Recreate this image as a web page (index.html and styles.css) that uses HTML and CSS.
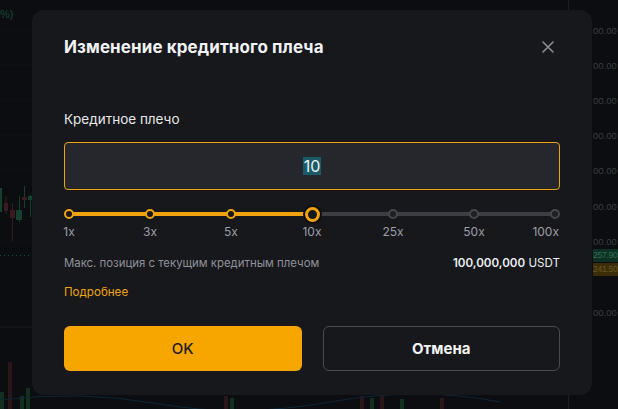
FILE: index.html
```html
<!DOCTYPE html>
<html lang="ru">
<head>
<meta charset="utf-8">
<link rel="stylesheet" href="styles.css">
</head>
<body>
<div class="backdrop">
  <svg class="chart" width="618" height="409" viewBox="0 0 618 409">
    <g stroke="#111318" stroke-width="1">
      <line x1="0" y1="30" x2="568" y2="30"/>
      <line x1="0" y1="65" x2="568" y2="65"/>
      <line x1="0" y1="100" x2="568" y2="100"/>
      <line x1="0" y1="135" x2="568" y2="135"/>
      <line x1="0" y1="170" x2="568" y2="170"/>
      <line x1="0" y1="206" x2="568" y2="206"/>
      <line x1="0" y1="242" x2="568" y2="242"/>
      <line x1="0" y1="312" x2="568" y2="312"/>
    </g>
    <line x1="0" y1="327" x2="568" y2="327" stroke="#1c1e23"/>
    <line x1="568.5" y1="0" x2="568.5" y2="409" stroke="#1c1e23"/>
    <line x1="0" y1="255.5" x2="568" y2="255.5" stroke="#1d4a3a" stroke-dasharray="1 3"/>
    <g>
      <rect x="0" y="188" width="2" height="24" fill="#16402e"/>
      <line x1="6" y1="196" x2="6" y2="214" stroke="#3a1c20"/>
      <rect x="4" y="203" width="4" height="8" fill="#3a1c20"/>
      <line x1="12.5" y1="203" x2="12.5" y2="241" stroke="#3a1c20"/>
      <rect x="10" y="210" width="5" height="8" fill="#3a1c20"/>
      <line x1="19.5" y1="196" x2="19.5" y2="222" stroke="#16402e"/>
      <rect x="16" y="210" width="6" height="10" fill="#16402e"/>
      <line x1="24.5" y1="186" x2="24.5" y2="208" stroke="#16402e"/>
      <rect x="22" y="197" width="5" height="3" fill="#3a1c20"/>
      <line x1="30.5" y1="195" x2="30.5" y2="217" stroke="#16402e"/>
      <rect x="28" y="196" width="4" height="4" fill="#16402e"/>
    </g>
    <g>
      <rect x="8" y="362" width="4" height="47" fill="#2a1519"/>
      <rect x="0" y="392" width="4" height="17" fill="#11301f"/>
      <rect x="20" y="396" width="4" height="13" fill="#11301f"/>
      <rect x="26" y="388" width="4" height="21" fill="#11301f"/>
      <rect x="224" y="396" width="4" height="13" fill="#2a1519"/>
      <rect x="230" y="398" width="4" height="11" fill="#11301f"/>
      <rect x="360" y="396" width="4" height="13" fill="#2a1519"/>
      <rect x="370" y="398" width="4" height="11" fill="#11301f"/>
      <rect x="380" y="396" width="4" height="13" fill="#2a1519"/>
      <rect x="400" y="399" width="4" height="10" fill="#11301f"/>
      <rect x="440" y="398" width="4" height="11" fill="#2a1519"/>
    </g>
    <path d="M0 400 Q 80 390 160 404 T 330 402 T 500 402" fill="none" stroke="#102636" stroke-width="1"/>
  </svg>
  <span class="pct">%)</span>
  <div class="axis">
    <span class="tick" style="top:24px">00.00</span>
    <span class="tick" style="top:59px">00.00</span>
    <span class="tick" style="top:94px">00.00</span>
    <span class="tick" style="top:129px">00.00</span>
    <span class="tick" style="top:164px">00.00</span>
    <span class="tick" style="top:200px">00.00</span>
    <span class="tick" style="top:235px">00.00</span>
    <span class="tick badge green" style="top:249px">257.90</span>
    <span class="tick badge amber" style="top:263px">241.50</span>
    <span class="tick" style="top:306px">00.00</span>
  </div>
</div>

<div class="modal">
  <div class="header">
    <h1 class="title">Изменение кредитного плеча</h1>
    <svg class="close" width="12" height="12" viewBox="0 0 12 12">
      <path d="M1 1 L11 11 M11 1 L1 11" stroke="#8b8e94" stroke-width="1.6" stroke-linecap="round"/>
    </svg>
  </div>

  <div class="label">Кредитное плечо</div>
  <div class="input"><span class="sel">10</span></div>

  <div class="slider">
    <div class="track"></div>
    <div class="fill" style="width:50%"></div>
    <span class="dot on" style="left:0%"></span>
    <span class="dot on" style="left:16.667%"></span>
    <span class="dot on" style="left:33.333%"></span>
    <span class="dot active" style="left:50%"></span>
    <span class="dot" style="left:66.667%"></span>
    <span class="dot" style="left:83.333%"></span>
    <span class="dot" style="left:100%"></span>
  </div>
  <div class="marks">
    <span class="mark" style="left:0%">1x</span>
    <span class="mark" style="left:16.667%">3x</span>
    <span class="mark" style="left:33.333%">5x</span>
    <span class="mark" style="left:50%">10x</span>
    <span class="mark" style="left:66.667%">25x</span>
    <span class="mark" style="left:83.333%">50x</span>
    <span class="mark last">100x</span>
  </div>

  <div class="info">
    <span class="muted">Макс. позиция с текущим кредитным плечом</span>
    <span class="value"><b>100,000,000</b> USDT</span>
  </div>
  <a class="more">Подробнее</a>

  <div class="actions">
    <button class="btn primary">OK</button>
    <button class="btn ghost">Отмена</button>
  </div>
</div>
</body>
</html>
```

FILE: styles.css
```css
* { box-sizing: border-box; }
html, body { margin: 0; padding: 0; }
body {
  width: 618px;
  height: 409px;
  overflow: hidden;
  background: #0b0d10;
  font-family: Inter, "Noto Sans", "Liberation Sans", sans-serif;
  position: relative;
}
.backdrop { position: absolute; inset: 0; }
.chart { position: absolute; left: 0; top: 0; }
.pct {
  position: absolute; left: 0; top: 8px;
  font-size: 11px; color: #1c4a36;
  font-family: "Liberation Sans", sans-serif;
}
.axis { position: absolute; left: 593px; top: 0; width: 25px; height: 409px; }
.tick {
  position: absolute; left: 0;
  font-family: "Liberation Sans", sans-serif;
  font-size: 9.5px; line-height: 13px;
  color: #3a3d43;
  white-space: nowrap;
}
.badge { font-size: 8.6px; letter-spacing: -0.3px; width: 25px; padding-left: 0; }
.green { background: #0e3124; color: #2f6e55; }
.amber { background: #3b2d09; color: #6b5820; }

.modal {
  position: absolute;
  left: 32px; top: 10px;
  width: 560px; height: 385px;
  background: #17181c;
  border-radius: 12px;
  padding: 25px 32px 24px;
  display: flex;
  flex-direction: column;
}
.header {
  height: 24px;
  display: flex;
  align-items: center;
  justify-content: space-between;
}
.title {
  margin: 0;
  font-size: 17px;
  font-weight: 700;
  color: #f1f2f4;
  letter-spacing: 0.1px;
}
.close { margin-right: 6px; }

.label {
  margin-top: 50px;
  line-height: 20px;
  font-size: 13.5px;
  color: #e6e8ea;
}
.input {
  margin-top: 13px;
  height: 48px;
  border: 1px solid #f0a20c;
  border-radius: 4px;
  background: #25272c;
  display: flex;
  align-items: center;
  justify-content: center;
}
.sel {
  background: #1b5b68;
  color: #eef1f3;
  font-size: 16px;
  line-height: 18px;
  padding: 0 0.5px;
}

.slider {
  position: relative;
  margin: 14px 5px 0;
  height: 20px;
}
.track, .fill {
  position: absolute;
  left: 0; top: 8px;
  height: 4px;
  border-radius: 2px;
}
.track { right: 0; background: #3c3e43; }
.fill { background: #f0a30c; }
.dot {
  position: absolute;
  top: 10px;
  width: 10px; height: 10px;
  margin: -5px 0 0 -5px;
  border-radius: 50%;
  border: 2px solid #46484d;
  background: #1d1f23;
}
.dot.on { border-color: #f0a30c; background: #17181c; }
.dot.active {
  width: 15px; height: 15px;
  margin: -7.5px 0 0 -7.5px;
  border: 3px solid #f0a30c;
  background: #17181c;
  box-shadow: 0 0 0 2px #0d0e10;
}

.marks {
  position: relative;
  height: 16px;
  margin: 0 5px;
}
.mark {
  position: absolute;
  top: 0;
  transform: translateX(-50%);
  font-size: 12px;
  line-height: 16px;
  color: #9c9fa5;
}
.mark.last { left: auto; right: -4px; transform: none; }

.info {
  margin-top: 14px;
  height: 18px;
  display: flex;
  align-items: center;
  justify-content: space-between;
  font-size: 11.4px;
}
.muted { color: #8f9298; }
.value { color: #eceef0; font-size: 11.6px; }
.value b { font-weight: 600; }
.more {
  margin-top: 11px;
  line-height: 18px;
  font-size: 11.6px;
  color: #f0a30c;
}

.actions {
  margin-top: 25px;
  display: grid;
  grid-template-columns: 1fr 1fr;
  gap: 21px;
}
.btn {
  height: 45px;
  border-radius: 6px;
  font-family: inherit;
  font-size: 15px;
}
.primary { background: #f7a600; border: 0; color: #1b1c1f; font-weight: 500; }
.ghost { background: transparent; border: 1px solid #494b50; color: #f3f4f6; font-weight: 700; }
```
